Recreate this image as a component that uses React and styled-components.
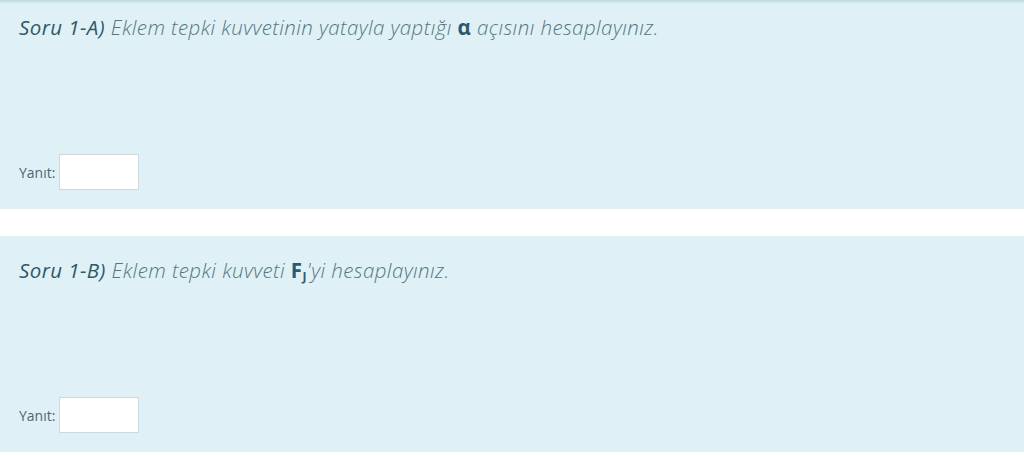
import React from "react";
import styled, { createGlobalStyle } from "styled-components";

const Global = createGlobalStyle`
  html, body { margin: 0; padding: 0; background: #ffffff; }
  body { font-family: "Open Sans", "Noto Sans", sans-serif; overflow: hidden; }
`;

const Page = styled.div`
  position: relative;
  width: 1024px;
  height: 456px;
  overflow: hidden;
`;

const TopShade = styled.div`
  position: absolute;
  top: 0;
  left: 0;
  right: 0;
  height: 4px;
  background: linear-gradient(to bottom, rgba(165, 195, 205, 0.6), rgba(165, 195, 205, 0));
  pointer-events: none;
`;

const List = styled.div`
  display: flex;
  flex-direction: column;
  gap: 27px;
  margin-top: -7px;
`;

const Question = styled.section`
  background: #dff1f7;
  height: 216px;
  box-sizing: border-box;
  padding: 20px 19px 0;
  display: flex;
  flex-direction: column;
`;

const Title = styled.div`
  font-family: "Open Sans", sans-serif;
  font-style: italic;
  font-weight: 300;
  font-size: 20.5px;
  line-height: 28px;
  height: 28px;
  color: #557680;
  letter-spacing: 0.42px;
  white-space: nowrap;
`;

const Label = styled.span`
  font-weight: 500;
  color: #2f5868;
`;

const Strong = styled.b`
  font-weight: 700;
  font-style: normal;
  color: #2f5868;
`;

const Sub = styled.sub`
  font-size: 12px;
  line-height: 0;
  vertical-align: -3px;
  font-weight: 700;
`;

const AnswerRow = styled.div`
  display: flex;
  align-items: center;
  gap: 4px;
  margin-top: 113px;
`;

const AnswerLabel = styled.label`
  font-family: "Open Sans", sans-serif;
  font-size: 14px;
  letter-spacing: 0;
  color: #52666d;
`;

const AnswerInput = styled.input`
  width: 80px;
  height: 36px;
  box-sizing: border-box;
  border: 1px solid #cfd9dd;
  background: #ffffff;
  padding: 0 6px;
  outline: none;
`;

const questions = [
  {
    id: "1-A",
    body: (
      <>
        Eklem tepki kuvvetinin yatayla yaptığı <Strong>α</Strong> açısını hesaplayınız.
      </>
    ),
  },
  {
    id: "1-B",
    body: (
      <>
        Eklem tepki kuvveti{" "}
        <Strong>
          F<Sub>J</Sub>
        </Strong>
        'yi hesaplayınız.
      </>
    ),
  },
];

export default function App() {
  return (
    <>
      <Global />
      <Page>
        <List>
          {questions.map((q) => (
            <Question key={q.id}>
              <Title>
                <Label>Soru {q.id})</Label> {q.body}
              </Title>
              <AnswerRow>
                <AnswerLabel>Yanıt:</AnswerLabel>
                <AnswerInput type="text" />
              </AnswerRow>
            </Question>
          ))}
        </List>
        <TopShade />
      </Page>
    </>
  );
}
